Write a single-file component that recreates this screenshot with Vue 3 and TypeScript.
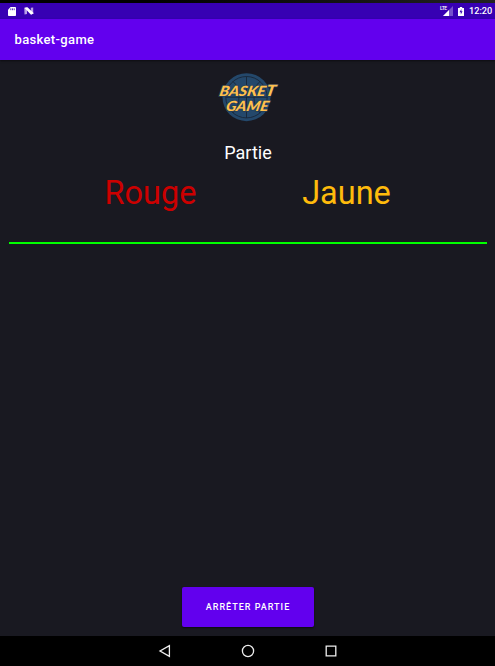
<script setup lang="ts">
import { ref } from 'vue'

interface Team {
  name: string
  tone: string
}

const title = 'basket-game'
const clock = ref('12:20')
const teams: Team[] = [
  { name: 'Rouge', tone: 'red' },
  { name: 'Jaune', tone: 'yellow' },
]
const running = ref(true)
</script>

<template>
  <div class="screen">
    <div class="bezel"></div>
    <header class="status">
      <svg class="sd" viewBox="0 0 8 9"><path d="M2.6 0H7.2Q8 0 8 .8V8.2Q8 9 7.2 9H.8Q0 9 0 8.2V2.7Z" fill="#fff" /><path d="M2.8 1.4v1.8M4.5 1.4v1.8M6.2 1.4v1.8" stroke="#3a00b3" stroke-width=".8" /></svg>
      <svg class="nougat" viewBox="0 0 10 8"><path d="M.3 1 3 .6V7L.5 7.6ZM6.8 .8 9.2 .4V6.8L7 7.4Z" fill="#b9a0e6" /><path d="M.3.8 3.5.3 9.8 6.3 7 7.8Z" fill="#fff" /></svg>
      <span class="grow"></span>
      <span class="signal">
        <span class="lte">LTE</span>
        <svg viewBox="0 0 10 10"><path d="M0 10 10 0V10Z" fill="#7650cc" /><path d="M0 10 6 4V10Z" fill="#fff" /></svg>
      </span>
      <svg class="battery" viewBox="0 0 6 9"><path d="M0 1H1.8V0H4.2V1H6V9H0Z" fill="#fff" /><path d="M3.4 2.1 1.5 5.2H2.8V7.6L4.6 4.3H3.4Z" fill="#3700b3" /></svg>
      <span class="clock">{{ clock }}</span>
    </header>
    <div class="appbar"><h1>{{ title }}</h1></div>

    <main>
      <svg class="logo" viewBox="0 0 64 54">
        <circle cx="30.5" cy="27.2" r="24" fill="#24486b" />
        <g fill="none" stroke="#192638" stroke-width=".9">
          <circle cx="30.5" cy="27.2" r="20.7" />
          <path d="M30.5 6.5v41.4M9.8 27.2h41.4M17 11.5c8 6 8 25 0 31.4M44 11.5c-8 6-8 25 0 31.4" />
        </g>
        <g class="lettering">
          <text transform="translate(2.8 25.6) skewX(-12)" font-size="14" textLength="55.8" lengthAdjust="spacingAndGlyphs">BASKE<tspan font-size="15.5">T</tspan></text>
          <text transform="translate(9.2 40.8) skewX(-12)" font-size="14" textLength="42.5" lengthAdjust="spacingAndGlyphs">GAME</text>
        </g>
      </svg>
      <h2>Partie</h2>
      <div class="teams">
        <span v-for="team in teams" :key="team.name" :class="['team', team.tone]">{{ team.name }}</span>
      </div>
      <div class="divider"></div>
      <button type="button" @click="running = false">ARRÊTER PARTIE</button>
    </main>

    <nav>
      <svg viewBox="0 0 14 14"><path d="M11.4 1.6V12.4L2 7Z" /></svg>
      <svg viewBox="0 0 14 14"><circle cx="7" cy="7" r="5.6" /></svg>
      <svg viewBox="0 0 14 14"><path d="M2.2 2.2H11.8V11.8H2.2Z" /></svg>
    </nav>
  </div>
</template>

<style>
body { margin: 0; background: #191a22; }
</style>

<style scoped>
.screen { width: 495px; height: 666px; display: flex; flex-direction: column; overflow: hidden; background: #191921; font-family: Roboto, sans-serif; }
.bezel { height: 3px; flex: none; background: linear-gradient(90deg, #000 30%, #222); }
.status { height: 16px; flex: none; box-sizing: border-box; display: flex; align-items: center; padding: 0 3px 0 7.5px; background: #3700b3; color: #fff; }
.sd { width: 8px; height: 9px; }
.nougat { width: 10px; height: 8px; margin-left: 8px; }
.grow { flex: 1; }
.signal { display: flex; align-items: flex-start; height: 10px; }
.signal svg { width: 10px; height: 10px; margin-left: -4px; }
.lte { font-size: 5px; line-height: 5px; width: 7px; letter-spacing: -.4px; font-weight: 500; }
.battery { width: 6px; height: 9px; margin: 0 5px 0 5px; }
.clock { font-size: 9.2px; line-height: 16px; font-weight: 500; width: 23px; white-space: nowrap; }
.appbar { height: 41px; flex: none; display: flex; align-items: center; padding-left: 14.5px; background: #6200ee; box-shadow: 0 1px 2px #0008; }
h1 { margin: 1px 0 0; color: #fff; font-size: 13px; line-height: 16px; font-weight: 500; letter-spacing: .35px; }
main { flex: 1; display: flex; flex-direction: column; align-items: center; }
.logo { width: 64px; height: 54px; margin: 10px 0 0 1px; flex: none; }
.lettering { font-family: Lato, sans-serif; font-weight: 900; font-style: italic; fill: #ffc04d; stroke: #253d56; stroke-width: 1.4px; paint-order: stroke; }
h2 { margin: 18px 0 0 1px; height: 22px; color: #fff; font-size: 18px; line-height: 22px; font-weight: 400; }
.teams { align-self: stretch; display: grid; grid-template-columns: 196px 196px; justify-content: center; margin-top: 8px; padding-left: 2px; }
.team { text-align: center; font-size: 32.5px; line-height: 43px; height: 42px; }
.red { color: #c00; }
.yellow { color: #ffbb0c; }
.divider { align-self: stretch; height: 2px; margin: 28px 8px 0 9px; background: #0f0; flex: none; }
button { width: 132px; height: 40px; margin: auto 0 9px; padding: 0 0 0 1px; border: 0; border-radius: 2px; background: #6200ee; color: #fff; font: 500 9px/40px Roboto, sans-serif; letter-spacing: 1px; box-shadow: 0 1px 2px #0009; }
nav { height: 30px; flex: none; display: flex; justify-content: center; align-items: center; gap: 69px; background: #000; }
nav svg { width: 14px; height: 14px; fill: none; stroke: #eee; stroke-width: 1.3; }
</style>
